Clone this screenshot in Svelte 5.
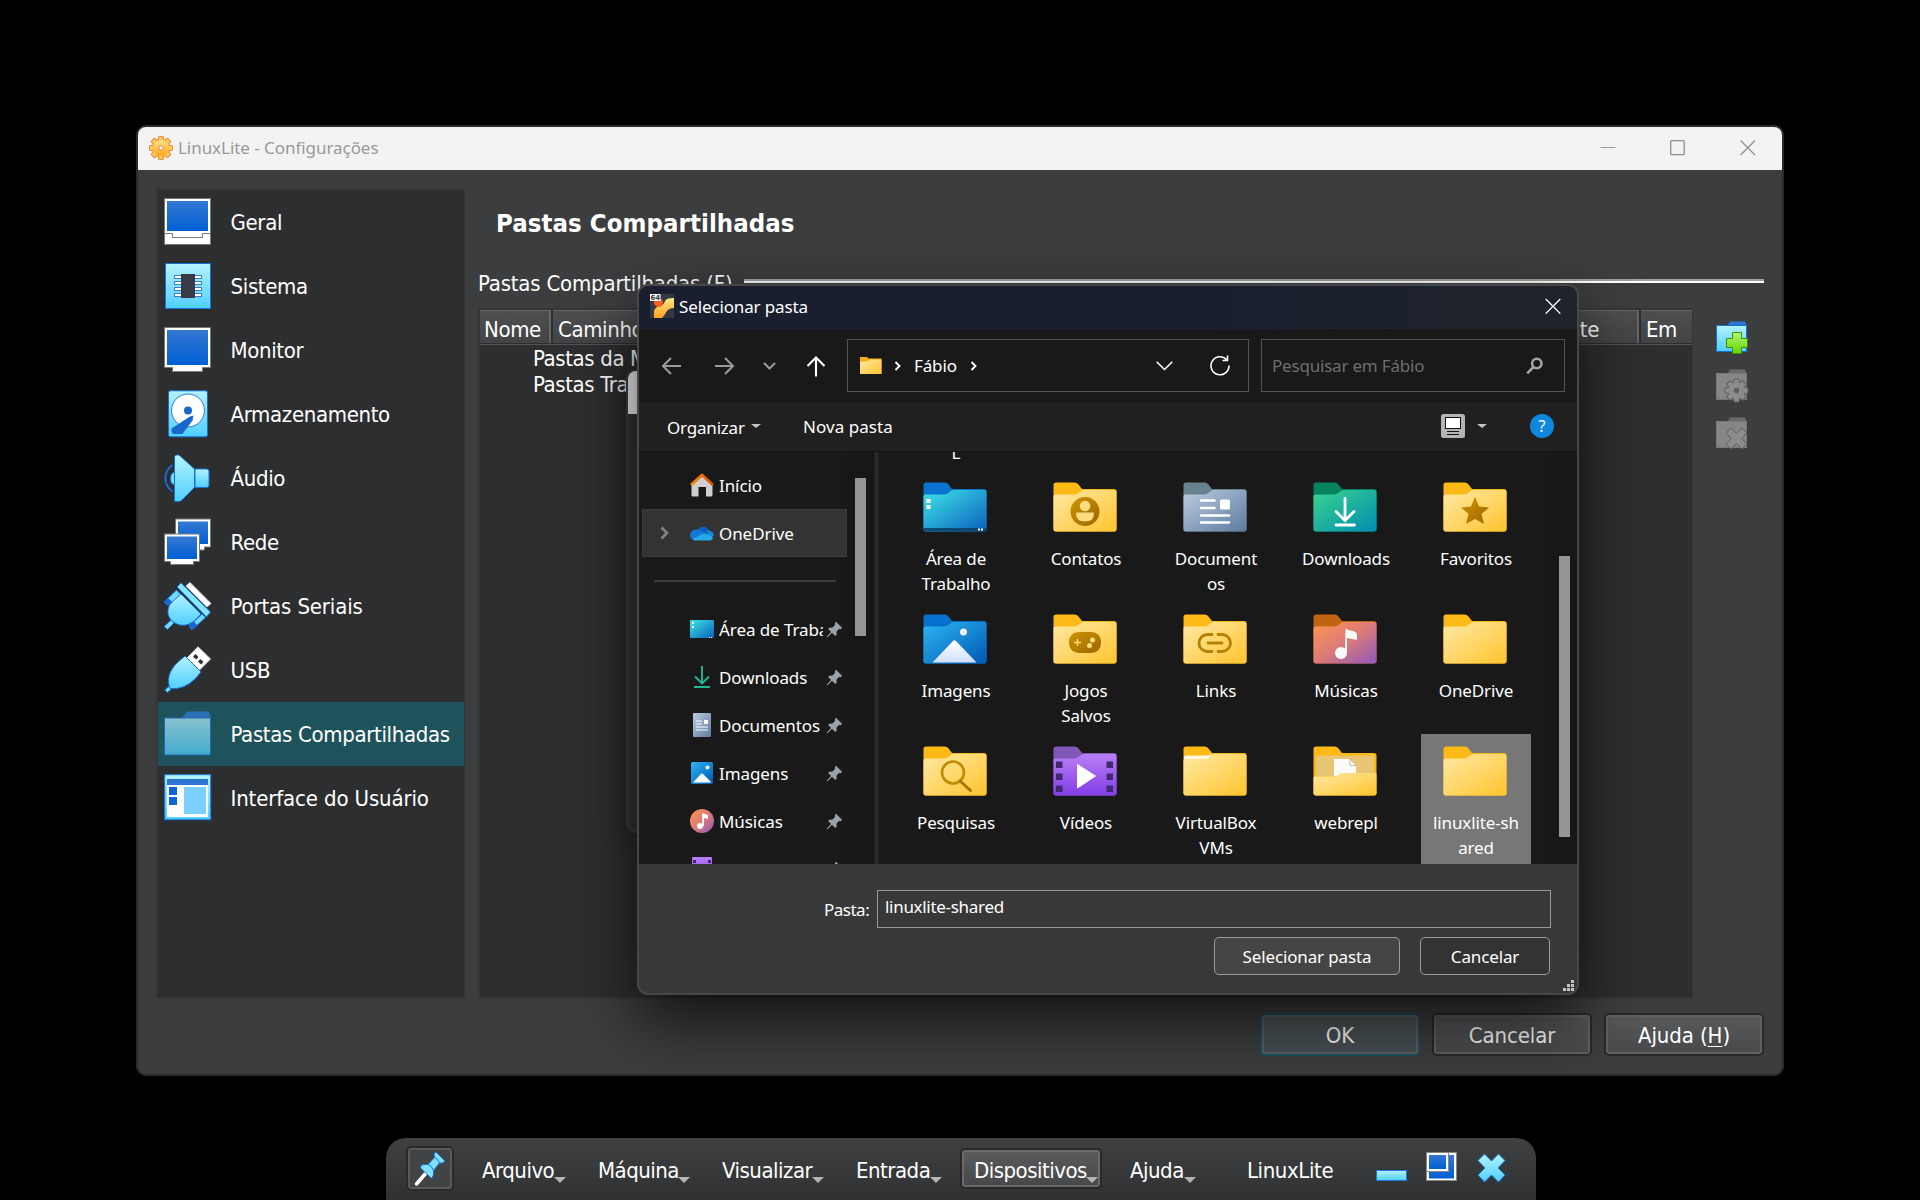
<script>
  const sections = [
    { icon: 'general', label: 'Geral' },
    { icon: 'system', label: 'Sistema' },
    { icon: 'monitor', label: 'Monitor' },
    { icon: 'disk', label: 'Armazenamento' },
    { icon: 'audio', label: 'Áudio' },
    { icon: 'network', label: 'Rede' },
    { icon: 'serial', label: 'Portas Seriais' },
    { icon: 'usb', label: 'USB' },
    { icon: 'shared', label: 'Pastas Compartilhadas', active: true },
    { icon: 'ui', label: 'Interface do Usuário' }
  ];

  const pinned = [
    { icon: 'desktop', label: 'Área de Trabalho' },
    { icon: 'downloads', label: 'Downloads' },
    { icon: 'documents', label: 'Documentos' },
    { icon: 'images', label: 'Imagens' },
    { icon: 'music', label: 'Músicas' },
    { icon: 'videos', label: 'Vídeos' }
  ];

  const folders = [
    { kind: 'desktop', lines: ['Área de', 'Trabalho'] },
    { kind: 'contacts', lines: ['Contatos'] },
    { kind: 'documents', lines: ['Document', 'os'] },
    { kind: 'downloads', lines: ['Downloads'] },
    { kind: 'favorites', lines: ['Favoritos'] },
    { kind: 'images', lines: ['Imagens'] },
    { kind: 'games', lines: ['Jogos', 'Salvos'] },
    { kind: 'links', lines: ['Links'] },
    { kind: 'music', lines: ['Músicas'] },
    { kind: 'plain', lines: ['OneDrive'] },
    { kind: 'search', lines: ['Pesquisas'] },
    { kind: 'videos', lines: ['Vídeos'] },
    { kind: 'white', lines: ['VirtualBox', 'VMs'] },
    { kind: 'open', lines: ['webrepl'] },
    { kind: 'plain', lines: ['linuxlite-sh', 'ared'], selected: true }
  ];

  const palettes = {
    desktop: ['#0a74d0', 'url(#gDesk)'],
    documents: ['#67828f', 'url(#gDocs)'],
    downloads: ['#07825f', 'url(#gDown)'],
    images: ['#0670cc', 'url(#gImg)'],
    music: ['#c0650f', 'url(#gMus)'],
    videos: ['#8059b8', 'url(#gVid)']
  };
  const palette = (kind) => palettes[kind] ?? ['#fdb916', 'url(#gYel)'];

  const menus = [
    { label: 'Arquivo', cls: 'm1' },
    { label: 'Máquina', cls: 'm2' },
    { label: 'Visualizar', cls: 'm3' },
    { label: 'Entrada', cls: 'm4' },
    { label: 'Dispositivos', cls: 'm5', active: true },
    { label: 'Ajuda', cls: 'm6' }
  ];

  const teeth = [0, 45, 90, 135, 180, 225, 270, 315];
</script>

{#snippet sectionIcon(name)}
  <svg class="sec-icon" width="48" height="48" viewBox="0 0 48 48">
    {#if name === 'general'}
      <rect x=".5" y=".5" width="46" height="46" fill="#fff" stroke="#777" />
      <rect x="3" y="3" width="41" height="30" fill="url(#gScreen)" />
      <path d="M.5 35.500H8.500V39.500H38.500V35.500H46.500" fill="none" stroke="#777" />
    {:else if name === 'system'}
      <rect x="1.500" y="1.500" width="45" height="45" fill="url(#gCyan)" stroke="#1a6fd6" />
      <g fill="#fff" stroke="#3f7fc0">
        <rect x="10.500" y="13.500" width="27" height="3" /><rect x="10.500" y="19.500" width="27" height="3" />
        <rect x="10.500" y="25.500" width="27" height="3" /><rect x="10.500" y="31.500" width="27" height="3" />
      </g>
      <rect x="17" y="12" width="14" height="24" fill="#383c46" />
    {:else if name === 'monitor'}
      <path d="M.5 1.500H46.500V41.500H38.500V45.500H8.500V41.500H.5Z" fill="#fff" stroke="#777" />
      <rect x="3" y="4" width="41" height="35" fill="url(#gScreen)" />
    {:else if name === 'disk'}
      <rect x="4.500" y=".8" width="39" height="46" rx="2" fill="url(#gCyan)" stroke="#1a6fd6" />
      <circle cx="24" cy="20.500" r="16.500" fill="#fff" stroke="#2a79d8" />
      <circle cx="24" cy="20.500" r="4" fill="#1767cc" />
      <path d="M26 26.500 29.500 25.500 28.500 30.500 18.500 44H10Q7 43.500 7.500 38.500Z" fill="#1767cc" />
    {:else if name === 'audio'}
      <path d="M8.500 11C-1 17.500-1 31 8.500 37.500" fill="none" stroke="#1a6fd6" stroke-width="1.800" />
      <path d="M10 18.500Q6.500 19 6.500 24.500T10 30.500" fill="#70dcff" stroke="#1a6fd6" />
      <path d="M31 15H42.500Q45 15 45 17V31Q45 33.500 42.500 33.500H31Z" fill="url(#gCyan)" stroke="#1a6fd6" />
      <path d="M10.500 3Q10.500 1 13 1H15L30.500 15V33.500L18 46Q16 48 13 47.500H10.500Z" fill="url(#gCyan)" stroke="#1a6fd6" />
    {:else if name === 'network'}
      <path d="M11.500 1H46.500V29H40.500V32H20V29H11.500Z" fill="#fff" stroke="#777" />
      <rect x="14" y="3.500" width="30" height="22.500" fill="url(#gScreen)" />
      <path d="M.5 16H35.500V43.500H29.500V46.500H6.500V43.500H.5Z" fill="#fff" stroke="#777" />
      <rect x="3" y="18.500" width="30" height="22.500" fill="url(#gScreen)" />
    {:else if name === 'serial'}
      <path d="M22 4 26 .500 47 21.500 43 25Z" fill="#fff" stroke="#ccd" />
      <path d="M0 20 12.500 8 18 13.500 6 25Z M25 44 38 32 41.500 35.500 28 48Z" fill="#6fd9ff" stroke="#1a6fd6" />
      <path d="M0 20 4 16 10 21.500 6 25Z M24 42 29 38.500 33 43 28 48Z" fill="#1767d0" />
      <path d="M0 44.500 7 38 10 41 3.500 47.500Z" fill="#70dcff" stroke="#1a6fd6" />
      <path d="M17 12 37 32 32 37C25 45 15 45 8 39C2 33 3 25 8 20Z" fill="url(#gCyan)" stroke="#1a6fd6" />
      <path d="M13 5 17 .800 46.500 30 42.500 35Z" fill="#86e6ff" stroke="#1a6fd6" />
    {:else if name === 'usb'}
      <path d="M23 12 34 .800 46.500 13 35.500 24Z" fill="#fff" stroke="#ddd" />
      <path d="M29 10.500 31.500 8 34.500 11 32 13.500Z M34 15.500 36.500 13 39.500 16 37 18.500Z" fill="#333" />
      <path d="M.8 44 7 38.500 9.500 41 3.500 46.500Z" fill="#70dcff" stroke="#1a6fd6" />
      <path d="M21 10 37 26 31 33Q20 44 6 42.500C3 35 4 25 14 16Z" fill="url(#gCyan)" stroke="#1a6fd6" />
    {:else if name === 'shared'}
      <path d="M18 8 23 1.500H45L47 8Z" fill="#2d6fb4" />
      <rect x=".5" y="8" width="46" height="37" fill="url(#gShared)" stroke="#2466b5" />
    {:else}
      <rect x=".7" y=".7" width="46" height="45" fill="url(#gCyan)" stroke="#1a7ae0" />
      <rect x="3" y="5" width="41" height="38" fill="#fff" />
      <rect x="3" y="5" width="41" height="6" fill="#2d74d2" />
      <path d="M5 13H13V21H5Z M5 23H13V31H5Z" fill="#0d66d4" />
      <rect x="20" y="13" width="22" height="27" fill="#7cd0ff" />
    {/if}
  </svg>
{/snippet}

{#snippet folderIcon(kind)}
  <svg class="folder" width="64" height="50" viewBox="0 0 64 50">
    <path d="M.5 3Q.5.500 3 .500H21.500Q24 .500 25.500 2.500L29 7H61Q63.500 7 63.500 9.500V47Q63.500 49.500 61 49.500H3Q.5 49.500 .5 47Z" fill={palette(kind)[0]} />
    {#if kind === 'open'}
      <path d="M3 9.500H61V30H3Z" fill="#e8c673" />
      <path d="M21 13H36.500L43 20V30H21Z" fill="#fbfbfb" />
      <path d="M37 13V19.500H43.500Z" fill="#fff" stroke="#b8a888" stroke-width=".8" />
      <path d="M.5 32Q.5 30.500 2.500 30.500H20Q23 30.500 25 29L27 27.500Q28 27 30 27H62Q63.500 27 63.500 28.500V47Q63.500 49.500 61 49.500H3Q.5 49.500 .5 47Z" fill="url(#gYel)" />
    {:else}
      <path d="M.5 14Q.5 12.500 2.500 12.500H21Q24 12.500 26 10.500L27 9.500Q28.500 8 31 8H61.500Q63.500 8 63.500 10V47Q63.500 49.500 61 49.500H3Q.5 49.500 .5 47Z" fill={palette(kind)[1]} />
      {#if kind === 'white'}<path d="M1 11.500Q1 9.500 3 9.500H24L28.500 8 26 11.500Q24.500 13 21 13H1Z" fill="#fff6dc" />{/if}
    {/if}
    {#if kind === 'desktop'}
      <path d="M.5 46H63.500V47Q63.500 49.500 61 49.500H3Q.5 49.500 .5 47Z" fill="#0c3e63" opacity=".85" />
      <path d="M3.500 17H7.500V21H3.500Z M3.500 23H7.500V27H3.500Z M55 46.500H57V48.500H55Z M58 46.500H60V48.500H58Z" fill="#fff" />
    {:else if kind === 'contacts'}
      <circle cx="32" cy="29.500" r="14.500" fill="url(#gGold)" />
      <circle cx="32" cy="24" r="5.300" fill="#ffdc80" />
      <path d="M23 31.500Q23 30.500 24.500 30.500H39.500Q41 30.500 41 31.500Q41 39.500 32 39.500T23 31.500Z" fill="#ffdc80" />
    {:else if kind === 'documents'}
      <path d="M18 18.500H31.500M18 26H31.500M18 33.500H46M18 40.500H46" stroke="#fff" stroke-width="2.600" stroke-linecap="round" />
      <rect x="37" y="17.500" width="10" height="10" rx="1.500" fill="#fff" />
    {:else if kind === 'downloads'}
      <path d="M32 16.500V38M23 29.500 32 38.500 41 29.500M23 43H41.500" fill="none" stroke="#fff" stroke-width="2.800" stroke-linecap="round" />
    {:else if kind === 'favorites'}
      <path d="M32 15 36 24.500 46 25.500 38.500 32 41 42 32 37 23 42 25.500 32 18 25.500 28 24.500Z" fill="url(#gGold)" />
    {:else if kind === 'images'}
      <circle cx="40.500" cy="18" r="3.500" fill="#f4f4f4" />
      <path d="M9.500 48.500 30 27Q31.500 25.500 33 27L53.500 48.500Z" fill="url(#gSnow)" />
    {:else if kind === 'games'}
      <rect x="16" y="18" width="32" height="21" rx="9.500" fill="url(#gGold)" />
      <path d="M21 28.500H28M24.500 25V32" stroke="#ffdc80" stroke-width="1.400" />
      <circle cx="39.500" cy="26" r="2.500" fill="#ffdc80" /><circle cx="36.500" cy="31.500" r="2.500" fill="#ffdc80" />
    {:else if kind === 'links'}
      <path d="M29 20.500H24.500A8.500 8.500 0 0 0 24.500 37.500H29M35 20.500H39A8.500 8.500 0 0 1 39 37.500H35M25 29H39" fill="none" stroke="#b58104" stroke-width="2.800" stroke-linecap="round" />
    {:else if kind === 'music'}
      <path d="M32.500 14.500Q36 16.500 40 17Q44 18 44 21V26L34 24V39H32Z" fill="#fafafa" /><circle cx="28" cy="39" r="6" fill="#fafafa" />
    {:else if kind === 'search'}
      <circle cx="30" cy="26.500" r="11" fill="none" stroke="#c18b06" stroke-width="2.600" />
      <path d="M37 35 47.500 44.500" stroke="#a87100" stroke-width="3" stroke-linecap="round" />
    {:else if kind === 'videos'}
      <path d="M3 15.500H9.500V22H3Z M3 27.500H9.500V34H3Z M3 39.500H9.500V46H3Z M53.500 15.500H60V22H53.500Z M53.500 27.500H60V34H53.500Z M53.500 39.500H60V46H53.500Z" fill="#43286f" />
      <path d="M24.500 18.500 42.500 30 24.500 42Z" fill="#fff" stroke="#fff" stroke-linejoin="round" />
    {/if}
  </svg>
{/snippet}

{#snippet placeIcon(name)}
  <svg width="24" height="24" viewBox="0 0 24 24">
    {#if name === 'home'}
      <path d="M1.500 11.500 12 2 22.500 11.500V22Q22.500 23.500 21 23.500H16V14H8.500V23.500H3Q1.500 23.500 1.500 22Z" fill="#cfcfcf" />
      <path d="M1 12 12 2 23 12" fill="none" stroke="url(#gRoof)" stroke-width="3" stroke-linejoin="round" />
    {:else if name === 'onedrive'}
      <path d="M6 17C3 13 6 9.500 7.500 8.500A6.500 6.500 0 0 1 18.500 9L12 15Z" fill="#0a61bd" />
      <path d="M5 19.500A5.300 5.300 0 0 1 6 8.800Q9 8 11.500 10L18 14Z" fill="#1178d4" />
      <path d="M16 10.500Q18 8.500 20.500 10A4.500 4.500 0 0 1 23.500 15L20 17Z" fill="#1689df" />
      <path d="M2.500 18 13.500 12.500Q15 11.800 17 13L23 16.500Q22.500 19.500 19.500 19.500H5Q3.500 19.500 2.500 18Z" fill="#28a8ea" />
    {:else if name === 'desktop'}
      <rect x="0" y="3" width="24" height="18" rx="1" fill="url(#gDesk)" />
      <path d="M2 5H4V7H2Z M2 9H4V11H2Z M19 20H20V21H19Z M21 20H22V21H21Z" fill="#fff" />
    {:else if name === 'downloads'}
      <path d="M12 1V18M5 11.500 12 18.500 19 11.500M4 22H20" fill="none" stroke="#22b894" stroke-width="1.900" />
    {:else if name === 'documents'}
      <rect x="3" y="0" width="18" height="24" rx="1" fill="url(#gDocs)" />
      <path d="M6 8H12M6 11H12M6 14H18M6 17H18" stroke="#fff" stroke-width="1.200" /><rect x="14" y="7" width="4" height="4" fill="#fff" />
    {:else if name === 'images'}
      <rect x="1" y="1" width="22" height="22" rx="1.500" fill="url(#gImg)" />
      <circle cx="17.500" cy="6.500" r="2" fill="#fff" /><path d="M3 21.500 11 13Q12 12.200 13 13L21.500 21.500Z" fill="#fff" />
    {:else if name === 'music'}
      <circle cx="12" cy="12" r="12" fill="url(#gMus)" />
      <path d="M12 4 18 6V10L14 9V17H12.500Z" fill="#fff" /><circle cx="10" cy="17" r="3" fill="#fff" />
    {:else}
      <rect x="2" y="0" width="20" height="23" rx="1" fill="url(#gVid)" />
      <path d="M3 3H6V6H3Z M18 3H21V6H18Z" fill="#43286f" />
    {/if}
  </svg>
{/snippet}

{#snippet actionFolder(kind)}
  <svg width="34" height="34" viewBox="0 0 34 34">
    <path d="M11 5 14 .5H29L31 5V9H11Z" fill={kind === 'add' ? '#2d74d2' : '#686a6a'} />
    <rect x=".5" y="4.500" width="30" height="26" fill={kind === 'add' ? 'url(#gCyan)' : '#858686'} stroke={kind === 'add' ? '#1a6fd6' : '#777878'} />
    {#if kind === 'add'}
      <path d="M16.500 11.500H25.500V17.500H31.500V26.500H25.500V32.500H16.500V26.500H10.500V17.500H16.500Z" fill="url(#gGreen)" stroke="#3c8d00" />
    {:else if kind === 'edit'}
      <g transform="translate(20.500 21.500)">
        {#each teeth as a}<rect x="-2.700" y="-11.500" width="5.400" height="6" rx=".8" fill="#8b8c8c" stroke="#5d5e5e" transform="rotate({a})" />{/each}
        <circle r="8.800" fill="#8b8c8c" stroke="#5d5e5e" />
        {#each teeth as a}<rect x="-2.200" y="-10" width="4.400" height="4" fill="#8b8c8c" transform="rotate({a})" />{/each}
        <circle r="2.700" fill="#5d5e5e" />
      </g>
    {:else}
      <path d="M15 11 20.500 16.500 26 11 31 16 25.500 21.500 31 27 26 32 20.500 26.500 15 32 10 27 15.500 21.500 10 16Z" fill="#8b8c8c" stroke="#5d5e5e" />
    {/if}
  </svg>
{/snippet}

<svg class="defs" width="0" height="0" aria-hidden="true">
  <defs>
    <linearGradient id="gScreen" x1="0" y1="0" x2="0" y2="1"><stop offset="0" stop-color="#3478d2" /><stop offset="1" stop-color="#005fd4" /></linearGradient>
    <linearGradient id="gCyan" x1="0" y1="0" x2="0" y2="1"><stop offset="0" stop-color="#b4f3ff" /><stop offset="1" stop-color="#4fcfff" /></linearGradient>
    <linearGradient id="gShared" x1="0" y1="0" x2="0" y2="1"><stop offset="0" stop-color="#88c1cc" /><stop offset="1" stop-color="#42abd0" /></linearGradient>
    <linearGradient id="gGreen" x1="0" y1="0" x2="0" y2="1"><stop offset="0" stop-color="#b2f570" /><stop offset="1" stop-color="#63d500" /></linearGradient>
    <linearGradient id="gYel" x1="0" y1="0" x2="1" y2="1"><stop offset="0" stop-color="#ffe9a6" /><stop offset="1" stop-color="#ffc42d" /></linearGradient>
    <linearGradient id="gDesk" x1="0" y1="0" x2="1" y2="1"><stop offset="0" stop-color="#3de6e6" /><stop offset="1" stop-color="#0a5fbf" /></linearGradient>
    <linearGradient id="gDocs" x1="0" y1="0" x2="1" y2="1"><stop offset="0" stop-color="#bccde1" /><stop offset="1" stop-color="#5d7a9e" /></linearGradient>
    <linearGradient id="gDown" x1="0" y1="0" x2="1" y2="1"><stop offset="0" stop-color="#39d48e" /><stop offset="1" stop-color="#008db0" /></linearGradient>
    <linearGradient id="gImg" x1="0" y1="0" x2="1" y2="1"><stop offset="0" stop-color="#2db5f3" /><stop offset="1" stop-color="#0058b3" /></linearGradient>
    <linearGradient id="gMus" x1="0" y1="0" x2="1" y2="1"><stop offset="0" stop-color="#ff9450" /><stop offset=".5" stop-color="#db7b78" /><stop offset="1" stop-color="#9058bd" /></linearGradient>
    <linearGradient id="gVid" x1="0" y1="0" x2="0" y2="1"><stop offset="0" stop-color="#b97ff5" /><stop offset="1" stop-color="#823de6" /></linearGradient>
    <linearGradient id="gGold" x1="0" y1="0" x2="1" y2="1"><stop offset="0" stop-color="#ce9500" /><stop offset="1" stop-color="#9c6600" /></linearGradient>
    <linearGradient id="gSnow" x1="0" y1="0" x2="0" y2="1"><stop offset="0" stop-color="#fff" /><stop offset="1" stop-color="#d3e0fb" /></linearGradient>
    <linearGradient id="gGear" x1="0" y1="0" x2="0" y2="1"><stop offset="0" stop-color="#ffe486" /><stop offset="1" stop-color="#ffa51e" /></linearGradient>
    <linearGradient id="gRoof" x1="0" y1="0" x2="1" y2="0"><stop offset="0" stop-color="#f58b10" /><stop offset="1" stop-color="#dc4f08" /></linearGradient>
  </defs>
</svg>

<div class="desktop">
  <section class="settings">
    <header class="titlebar">
      <svg class="gear" width="24" height="24" viewBox="-12 -12 24 24">
        {#each teeth as a}<rect x="-2.500" y="-11.600" width="5" height="6" rx=".8" fill="#ffc850" stroke="#e8843a" transform="rotate({a})" />{/each}
        <circle r="8.600" fill="url(#gGear)" stroke="#e8843a" />
        {#each teeth as a}<rect x="-2" y="-10" width="4" height="4" fill="#ffc850" transform="rotate({a})" />{/each}
        <circle r="7.800" fill="url(#gGear)" />
        <circle r="2.200" fill="#fff" stroke="#e8843a" />
      </svg>
      <span class="title">LinuxLite - Configurações</span>
      <div class="controls">
        <svg width="16" height="16" viewBox="0 0 16 16"><path d="M.5 7.500H15.500" stroke="#9a9a9a" /></svg>
        <svg width="16" height="16" viewBox="0 0 16 16"><rect x=".7" y=".7" width="13.500" height="14" rx="1" fill="none" stroke="#8f8f8f" stroke-width="1.300" /></svg>
        <svg width="16" height="16" viewBox="0 0 16 16"><path d="M.5.500 15 15M15 .5 .5 15" stroke="#8f8f8f" stroke-width="1.200" /></svg>
      </div>
    </header>
    <div class="body">
      <nav class="sections">
        {#each sections as s}
          <div class="section" class:active={s.active}>
            {@render sectionIcon(s.icon)}
            <span class:wide={s.icon === 'ui' || s.icon === 'serial'}>{s.label}</span>
          </div>
        {/each}
      </nav>
      <main>
        <h1>Pastas Compartilhadas</h1>
        <div class="group"><span>Pastas Compartilhadas (F)</span><i></i></div>
        <div class="tablewrap">
          <div class="table">
            <div class="thead">
              <span class="c1">Nome</span><span class="c2">Caminho</span><span class="c3">Automaticamente</span><span class="c4">Em</span>
            </div>
            <div class="trow">Pastas da Máquina</div>
            <div class="trow">Pastas Transientes</div>
          </div>
          <div class="actions">
            {@render actionFolder('add')}
            {@render actionFolder('edit')}
            {@render actionFolder('remove')}
          </div>
        </div>
      </main>
    </div>
    <footer>
      <button class="qbtn default">OK</button>
      <button class="qbtn">Cancelar</button>
      <button class="qbtn">Ajuda (<u>H</u>)</button>
    </footer>
  </section>

  <section class="behind"><div class="behind-title"></div></section>

  <section class="dialog">
    <header class="dtitle">
      <svg width="24" height="24" viewBox="0 0 24 24">
        <rect width="24" height="24" fill="#333842" />
        <path d="M4 24V17Q5 13 10 12Q14 11 15 7Q16 4 24 4V14Q19 14 17 17Q14 22 12 24Z" fill="url(#gGear)" />
        <circle cx="8.500" cy="8.500" r="4.500" fill="#f2601c" />
        <rect width="10.500" height="7" fill="#fff" />
        <text x="5.200" y="6" text-anchor="middle" class="tiny">64</text>
      </svg>
      <span>Selecionar pasta</span>
      <svg class="dclose" width="16" height="16" viewBox="0 0 16 16"><path d="M.7 1 15.300 15.600M15.300 1 .7 15.600" stroke="#fff" stroke-width="1.300" /></svg>
    </header>

    <div class="navbar">
      <svg class="arrows" width="170" height="24" viewBox="0 0 170 24" fill="none" stroke="#9a9a9a" stroke-width="2.100">
        <path d="M2 12H20M10 4 2 12 10 20" />
        <path d="M54 12H72M64 4 72 12 64 20" />
        <path d="M103 9 108.500 14.500 114 9" />
        <path d="M155 22.500V3.500M146.500 12 155 3.500 163.500 12" stroke="#fff" />
      </svg>
      <div class="address">
        <svg width="24" height="18" viewBox="0 0 24 18"><path d="M1 0H8L9.500 1.500H22.500V17H1Z" fill="#f9ad14" /><path d="M1 4.500H8L10.500 2.500H22.500V17H1Z" fill="url(#gYel)" /></svg>
        <svg class="crumb1" width="8" height="12" viewBox="0 0 8 12"><path d="M1.500 2 5.500 6 1.500 10" fill="none" stroke="#fff" stroke-width="1.900" /></svg>
        <span>Fábio</span>
        <svg width="8" height="12" viewBox="0 0 8 12"><path d="M1.500 2 5.500 6 1.500 10" fill="none" stroke="#fff" stroke-width="1.900" /></svg>
        <svg class="drop" width="17" height="10" viewBox="0 0 17 10"><path d="M.7.700 8.500 8.500 16.300.700" fill="none" stroke="#fff" stroke-width="1.500" /></svg>
        <svg class="reload" width="22" height="22" viewBox="0 0 22 22"><path d="M17.500 4.500A9 9 0 1 0 20 10.500M18.500.500V5.500H13.500" fill="none" stroke="#fff" stroke-width="1.600" /></svg>
      </div>
      <div class="searchbox">
        <span>Pesquisar em Fábio</span>
        <svg width="18" height="18" viewBox="0 0 18 18"><circle cx="10.800" cy="6.500" r="4.700" fill="none" stroke="#a3a3a3" stroke-width="2.600" /><path d="M7.500 10 1.200 16.300" stroke="#a3a3a3" stroke-width="2.600" /></svg>
      </div>
    </div>

    <div class="toolbar">
      <span class="organize">Organizar</span><b class="caret"></b>
      <span class="newfolder">Nova pasta</span>
      <svg class="view" width="24" height="24" viewBox="0 0 24 24"><rect width="24" height="24" rx="2.500" fill="#b4b4b4" /><rect x="4.500" y="3.500" width="15" height="11" fill="#fff" stroke="#111" /><path d="M6 17.500H18M6 20.500H18" stroke="#111" /></svg>
      <b class="caret viewcaret"></b>
      <svg class="help" width="24" height="24" viewBox="0 0 24 24"><circle cx="12" cy="12" r="12" fill="#0f87dc" /><text x="12" y="18" text-anchor="middle" class="q">?</text></svg>
    </div>

    <div class="browser">
      <aside>
        <div class="place"><i class="exp"></i>{@render placeIcon('home')}<span>Início</span></div>
        <div class="place hot">
          <i class="exp"><svg width="9" height="14" viewBox="0 0 9 14"><path d="M1.500 1.500 7 7 1.500 12.500" fill="none" stroke="#858585" stroke-width="2.600" /></svg></i>
          {@render placeIcon('onedrive')}<span>OneDrive</span>
        </div>
        <div class="divider"><hr /></div>
        {#each pinned as p}
          <div class="place">
            <i class="exp"></i>{@render placeIcon(p.icon)}<span>{p.label}</span>
            <svg class="pin" width="17" height="17" viewBox="0 0 17 17"><path d="M10 .800 16.200 7 14.500 8.200 13 8 10.500 10.500 10.500 14 9.200 15 6 11.800 1.500 16.200.8 15.500 5 11 2 7.800 3.200 6.800 6.500 6.500 9 4 8.800 2.200Z" fill="#9aa3aa" /></svg>
          </div>
        {/each}
      </aside>
      <div class="sidescroll"><div class="thumb"></div></div>
      <div class="splitter"></div>
      <div class="files">
        <div class="above">L</div>
        <div class="grid">
          {#each folders as f}
            <div class="tile" class:selected={f.selected}>
              {@render folderIcon(f.kind)}
              <div class="name">{#each f.lines as line}<div>{line}</div>{/each}</div>
            </div>
          {/each}
        </div>
      </div>
      <div class="filescroll"><div class="thumb"></div></div>
    </div>

    <div class="dfoot">
      <div class="field"><label for="folder">Pasta:</label><div id="folder" class="input">linuxlite-shared</div></div>
      <div class="dbuttons">
        <button class="primary">Selecionar pasta</button>
        <button>Cancelar</button>
      </div>
      <svg class="grip" width="11" height="12" viewBox="0 0 11 12"><path d="M8 0H11V3H8Z M4 4H7V7H4Z M8 4H11V7H8Z M0 8H3V11H0Z M4 8H7V11H4Z M8 8H11V11H8Z" fill="#c4c4c4" /></svg>
    </div>
  </section>

  <section class="minibar">
    <div class="pinbtn">
      <svg width="32" height="36" viewBox="0 0 32 36">
        <path d="M2.500 33 12 22" stroke="#fff" stroke-width="3.500" stroke-linecap="round" />
        <path d="M6.500 17Q6 14 9.500 13.500H14L20.500 6.500 20 2.500 22 1 30.500 9.500 29.500 12 25.500 12 19.500 19.500V24L17.500 27.500Z" fill="#7fe0ff" stroke="#1a6fd6" />
        <path d="M14 13.500Q18 15 19.500 19.500M20.500 6.500Q24 8 25.500 12" fill="none" stroke="#1a6fd6" />
      </svg>
    </div>
    {#each menus as m}
      <div class="menu {m.cls}" class:pressed={m.active}><span>{m.label}</span><b></b></div>
    {/each}
    <span class="vmname">LinuxLite</span>
    <svg class="wmin" width="31" height="12" viewBox="0 0 31 12"><rect x=".5" y=".5" width="30" height="10" fill="url(#gCyan)" stroke="#1a7ae0" /></svg>
    <svg class="wrest" width="31" height="30" viewBox="0 0 31 30">
      <rect x=".5" y=".5" width="30" height="28" fill="#fff" stroke="#888" /><rect x="3" y="3" width="25" height="23.500" fill="url(#gScreen)" />
      <path d="M1 1H23V20H1Z" fill="#fff" /><path d="M22.500 1V19.500H1" fill="none" stroke="#888" /><rect x="3" y="3" width="17" height="14" fill="url(#gScreen)" />
    </svg>
    <svg class="wclose" width="29" height="30" viewBox="0 0 29 30"><path d="M7.500 1 14.500 8 21.500 1 28 7.500 21 15 28 22 21.500 29 14.500 22 7.500 29 1 22 8 15 1 7.500Z" fill="url(#gCyan)" stroke="#1a7ae0" /></svg>
  </section>
</div>

<style>
  :global(body) { margin: 0; background: #000; }
  * { box-sizing: border-box; }
  svg { display: block; flex: none; }
  .defs { position: absolute; }
  .desktop {
    position: relative; width: 1920px; height: 1200px; overflow: hidden; background: #000; color: #fff;
    font: 22px/26px "DejaVu Sans Condensed", "DejaVu Sans", sans-serif; font-stretch: condensed; letter-spacing: -0.38px;
    white-space: nowrap;
  }
  button { font: inherit; letter-spacing: inherit; color: inherit; padding: 0; }

  /* settings window */
  .settings {
    position: absolute; left: 136px; top: 125px; width: 1648px; height: 951px; border: 2px solid #2b2b2b;
    border-radius: 10px; background: #3c3d3e; overflow: hidden; display: flex; flex-direction: column;
  }
  .titlebar {
    height: 43px; flex: none; background: #f3f3f3; display: flex; align-items: center; padding: 0 26px 2px 11px;
    font: 17px/25px "Noto Sans", sans-serif; letter-spacing: -0.05px; color: #999;
  }
  .title { margin-left: 5px; flex: 1; }
  .controls { display: flex; gap: 54px; }
  .body { display: flex; padding: 18px 18px 0 18px; height: 829px; flex: none; }
  .sections { width: 309px; height: 811px; background: #2d2e30; border: 2px solid #353638; border-right-width: 1px; flex: none; }
  .section { height: 64px; display: flex; align-items: center; padding-left: 6px; }
  .section span { margin-left: 18.5px; padding-top: 2px; letter-spacing: -0.34px; }
  .section .wide { letter-spacing: -0.14px; }
  .section.active { background: #1f535c; }
  main { flex: 1; margin-left: 13px; display: flex; flex-direction: column; }
  h1 { margin: 18px 0 0 18px; height: 34px; font-size: 25.5px; line-height: 34px; font-weight: 700; letter-spacing: 0.07px; }
  .group { height: 26px; margin-top: 30px; display: flex; align-items: center; }
  .group span { width: 266px; padding-top: 2px; letter-spacing: -0.2px; }
  .group i { flex: 1; height: 4px; background: linear-gradient(#a0a0a0 50%, #fff 50%); margin-top: -4px; }
  .tablewrap { margin-top: 12px; display: flex; flex: 1; }
  .table { width: 1215px; background: #2d2e30; border: 2px solid #353638; border-right-width: 1px; }
  .thead { display: flex; height: 35px; border-bottom: 1px solid #515254; margin-bottom: 1px; line-height: 37px; }
  .thead span { height: 33px; background: linear-gradient(#4d4e50, #434446); border-top: 1px solid #666; border-right: 2px solid #666; overflow: hidden; }
  .c1 { width: 71px; padding-left: 4px; margin-right: 2px; }
  .c2 { width: 400px; padding-left: 5px; }
  .c3 { flex: 1; text-align: right; padding-right: 38px; margin-right: 2px; }
  .c4 { width: 51px; padding-left: 5px; border-right: 0 !important; }
  .trow { height: 26px; line-height: 26px; padding-left: 53px; }
  .actions { margin-left: 23px; padding-top: 13px; display: flex; flex-direction: column; gap: 14px; }
  footer { display: flex; justify-content: flex-end; gap: 12px; padding: 14px 18px 0 0; }
  .qbtn {
    width: 160px; height: 43px; border: 2px solid #29292b; border-radius: 5px; padding-top: 2px; letter-spacing: -0.1px;
    background: linear-gradient(#58595a, #48494b); box-shadow: inset 0 0 0 2px #606163;
  }
  .qbtn.default { border-color: #1b5260; background: linear-gradient(#505455, #455054); }
  u { text-underline-offset: 3px; text-decoration-thickness: 1px; }

  /* window partly hidden behind the file dialog */
  .behind { position: absolute; left: 626px; top: 369px; width: 500px; height: 464px; border: 2px solid #3c3d3e; border-radius: 10px; overflow: hidden; background: #333; box-shadow: 0 4px 24px rgba(0, 0, 0, .35); }
  .behind-title { height: 43px; background: #f3f3f3; }

  /* file dialog */
  .dialog {
    position: absolute; left: 637px; top: 284px; width: 942px; height: 711px; border: 2px solid #474747; border-radius: 11px;
    overflow: hidden; background: #383838; box-shadow: 0 26px 64px rgba(0, 0, 0, .7);
    font: 17px/25px "Noto Sans", sans-serif; letter-spacing: -0.13px;
  }
  .dtitle { height: 43px; display: flex; align-items: center; padding: 0 16px 3px 11px; background: linear-gradient(90deg, #1a1f2f 0 60%, #1c222c 80%, #20232a); }
  .dtitle span { margin-left: 5px; flex: 1; }
  .tiny { font: 700 7px "DejaVu Sans", sans-serif; fill: #333; }
  .navbar { height: 74px; display: flex; align-items: center; padding: 0 12px 1px 22px; background: #191919; }
  .arrows { margin-right: 16px; }
  .address, .searchbox { height: 53px; border: 1px solid #535353; display: flex; align-items: center; }
  .address { width: 402px; margin-right: 12px; padding-left: 11px; }
  .address .crumb1 { margin: 0 12px 0 11px; }
  .address span { width: 56px; }
  .drop { margin-left: 178px; }
  .reload { margin-left: 36px; }
  .searchbox { flex: 1; padding: 0 20px 0 10px; color: #6e6e6e; justify-content: space-between; letter-spacing: -0.2px; }
  .toolbar { height: 48px; display: flex; align-items: center; background: #202020; padding: 0 0 2px 28px; }
  .organize { width: 84px; padding-top: 2px; letter-spacing: -0.2px; }
  .caret { border: 5px solid transparent; border-top: 4px solid #c4c4c4; border-bottom: 0; margin-top: 0; }
  .newfolder { margin-left: 42px; width: 639px; letter-spacing: 0.05px; }
  .view { margin-left: -1px; }
  .viewcaret { margin-left: 12px; }
  .help { margin-left: 43px; }
  .q { font: 16px "Noto Sans", sans-serif; fill: #fff; }
  .browser { height: 413px; display: flex; background: #191919; overflow: hidden; border-top: 1px solid #151515; }
  aside { width: 208px; padding: 9px 0 0 3px; }
  .place { height: 48px; display: flex; align-items: center; }
  .place.hot { background: #333; box-shadow: inset 0 0 0 1px #3b3b3b; }
  .exp { width: 48px; padding-left: 18px; flex: none; }
  .place span { margin-left: 5px; width: 104px; overflow: hidden; letter-spacing: -0.08px; }
  .pin { margin-left: 3px; }
  .divider { height: 48px; padding: 23px 11px 0 12px; }
  hr { height: 2px; margin: 0; border: 0; background: #3b3b3b; }
  .sidescroll { width: 27px; background: #171717; padding: 26px 0 0 8px; }
  .thumb { width: 11px; background: #959595; }
  .sidescroll .thumb { height: 158px; }
  .splitter { width: 5px; background: #292929; border: solid #202020; border-width: 0 1px; }
  .files { width: 672px; position: relative; padding: 18px 0 0 22px; }
  .above { position: absolute; left: 21px; top: -12px; width: 112px; text-align: center; line-height: 25px; clip-path: inset(12px 0 0 0); }
  .grid { display: grid; grid-template-columns: repeat(5, 110px); grid-auto-rows: 130px; gap: 2px 20px; }
  .tile { padding-top: 12px; display: flex; flex-direction: column; align-items: center; }
  .tile .folder { margin-right: 2px; }
  .tile.selected { background: #777; }
  .name { margin-top: 14px; text-align: center; }
  .filescroll { width: 26px; background: #171717; padding: 104px 0 0 8px; }
  .filescroll .thumb { height: 281px; }
  .dfoot { position: relative; padding: 26px 26px 0 0; }
  .field { display: flex; justify-content: flex-end; }
  .field label { width: 53px; padding-top: 7px; letter-spacing: -0.5px; }
  .input { width: 674px; height: 38px; border: 1px solid #999; padding: 3px 7px; letter-spacing: -0.3px; }
  .dbuttons { display: flex; justify-content: flex-end; gap: 20px; margin: 9px 1px 0 0; }
  .dbuttons button { width: 130px; height: 38px; border: 1px solid #9b9b9b; border-radius: 5px; background: #333; padding-top: 0; }
  .dbuttons .primary { width: 186px; background: #454545; }
  .grip { position: absolute; right: 3px; bottom: -17px; }

  /* VM mini toolbar */
  .minibar {
    position: absolute; left: 386px; top: 1138px; width: 1150px; height: 62px; border-radius: 20px 20px 0 0;
    background: linear-gradient(#3f4041, #303132); display: flex; align-items: flex-start; padding-left: 20px; letter-spacing: -0.5px;
  }
  .pinbtn { width: 48px; height: 45px; margin-top: 8px; border: 2px solid #292a2b; border-radius: 5px; box-shadow: inset 0 0 0 2px #58595a; background: #424344; padding: 3px 0 0 6px; }
  .menu { position: relative; margin-top: 10px; height: 41px; line-height: 45px; flex: none; }
  .menu b { position: absolute; right: 0; bottom: 6px; border: 6px solid transparent; border-top: 6px solid #b4b4b4; border-bottom: 0; }
  .m1 { margin-left: 28px; width: 84px; }
  .m2 { margin-left: 32px; width: 92px; }
  .m3 { margin-left: 32px; width: 102px; }
  .m4 { margin-left: 32px; width: 86px; }
  .m5 { margin-left: 18px; width: 142px; }
  .m6 { margin-left: 28px; width: 66px; }
  .pressed { border-radius: 5px; border: 2px solid #29292b; background: linear-gradient(#5a5b5c, #464748); box-shadow: inset 0 0 0 2px #68696a; line-height: 41px; padding-left: 12px; }
  .pressed b { right: 2px; bottom: 4px; }
  .vmname { margin: 10px 0 0 51px; line-height: 45px; width: 129px; letter-spacing: -0.4px; }
  .wmin { margin-top: 32px; }
  .wrest { margin: 14px 0 0 19px; }
  .wclose { margin: 15px 0 0 20px; }
</style>
